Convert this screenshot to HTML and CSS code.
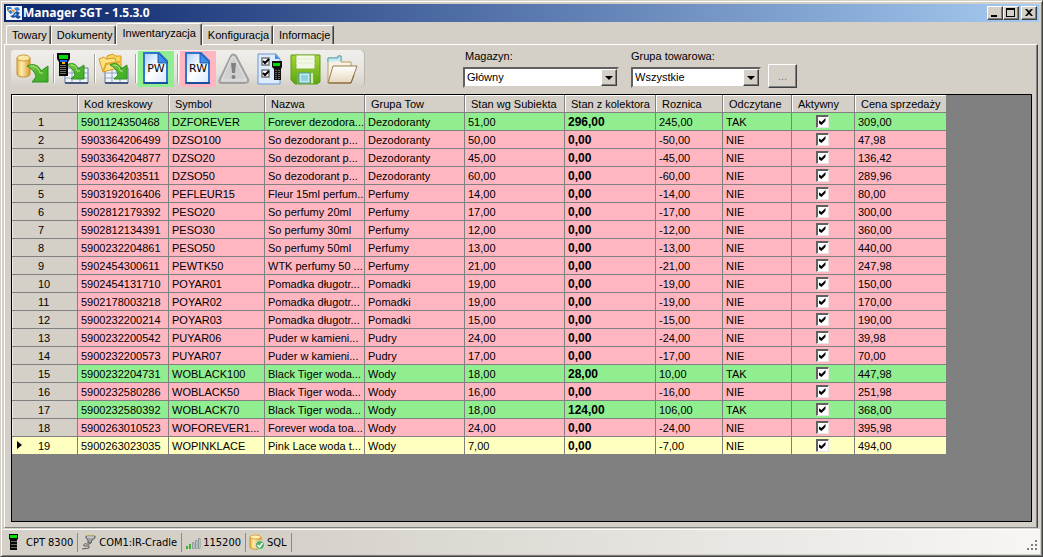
FILE: index.html
```html
<!DOCTYPE html>
<html lang="pl">
<head>
<meta charset="utf-8">
<title>Manager SGT</title>
<link rel="stylesheet" href="styles.css">
</head>
<body>
<svg class="defs" width="0" height="0" aria-hidden="true">
  <defs>
    <linearGradient id="green" x1="0" y1="0" x2="1" y2="1"><stop offset="0" stop-color="#8ed24e"/><stop offset=".5" stop-color="#4fb52c"/><stop offset="1" stop-color="#3fae2a"/></linearGradient>
    <linearGradient id="gold"><stop offset="0" stop-color="#e9b44a"/><stop offset=".35" stop-color="#fdeeb0"/><stop offset="1" stop-color="#d99a2b"/></linearGradient>
    <linearGradient id="page" x1="0" y1="0" x2="1" y2="1"><stop offset="0" stop-color="#a9cdf8"/><stop offset=".5" stop-color="#ffffff"/><stop offset="1" stop-color="#d5e6fb"/></linearGradient>
    <linearGradient id="lime" x1="0" y1="0" x2="0" y2="1"><stop offset="0" stop-color="#a5d632"/><stop offset="1" stop-color="#5da512"/></linearGradient>
    <linearGradient id="cream" x1="0" y1="0" x2="0" y2="1"><stop offset="0" stop-color="#ffffff"/><stop offset="1" stop-color="#e5d7bd"/></linearGradient>
    <g id="arrow"><path d="M0 2C6-1 12 1 14 7L21 2V18H5L9 13C8 8 5 5 0 2Z" fill="url(#green)" stroke="#2f8f1f"/><path d="M4 2C9 2 12 5 13 9L16 9" fill="none" stroke="#b6e58b"/></g>
    <g id="arrow-small"><path d="M0 2C5-1 10 1 11 6L17 2V16H4L8 12C7 7 4 4 0 2Z" fill="url(#green)" stroke="#2f8f1f"/><path d="M4 2C8 2 10 5 10 8L13 8" fill="none" stroke="#b6e58b"/></g>
    <g id="scanner"><path d="M0 0H13V6L11 9V23H2V9L0 6Z" fill="#080808"/><path d="M2 2H11V6H2Z" fill="#00d800"/><path d="M3 8H10" stroke="#1767e8" stroke-width="2"/><path d="M5 10H8" stroke="#f0c000" stroke-width="2"/><path d="M4 12V22M6 12V22M8 12V22" stroke="#d8d8d8" stroke-dasharray="1 1"/></g>
    <g id="grid"><path d="M0 0H23V15H0Z" fill="#f0f4fa" stroke="#637899"/><path d="M0 5H23M0 10H23M7 0V15M15 0V15" stroke="#8fa3c2"/><path d="M0 15H23" stroke="#46597c" stroke-width="2"/></g>
    <g id="sheet"><path d="M1 1H16L24 9V31H1Z" fill="url(#page)" stroke="#2f74d0" stroke-width="2"/><path d="M15 1L25 11H15Z" fill="#3d8ee8" stroke="#1c58b0"/><path d="M1 31H25" stroke="#174f9f" stroke-width="2"/></g>
  </defs>
</svg>

<div class="window">
  <header class="titlebar">
    <svg class="logo" width="16" height="14" viewBox="0 0 16 14" aria-hidden="true"><path d="M0 0H16V14H0Z" fill="#eef4fb"/><path d="M1 1H5L6 3H3V4H1ZM2 5L5 4 7 7 4 8ZM8 2L12 1 14 4 10 5Z" fill="#2f83d2"/><path d="M5 3L9 4 8 7 6 5ZM1 4H3V5H1Z" fill="#f3912c"/><path d="M8 7L11 5 14 7 12 9 15 11 12 13 9 11 7 12 4 10 7 9Z" fill="#1b50a0"/><path d="M9 7L11 9 8 10Z" fill="#83baf0"/></svg>
    <h1 class="caption">Manager SGT - 1.5.3.0</h1>
    <div class="window-buttons">
      <button class="winbtn" type="button" aria-label="Minimalizuj"><svg width="12" height="10" viewBox="0 0 12 10"><path d="M2 7H8V9H2Z"/></svg></button>
      <button class="winbtn" type="button" aria-label="Maksymalizuj"><svg width="12" height="10" viewBox="0 0 12 10"><path d="M1 0H10V9H1ZM2 2V8H9V2Z" fill-rule="evenodd"/></svg></button>
      <button class="winbtn winbtn-close" type="button" aria-label="Zamknij"><svg width="12" height="10" viewBox="0 0 12 10"><path d="M2 1H4L6 3 8 1H10L7 4.5 10 8H8L6 6 4 8H2L5 4.5Z"/></svg></button>
    </div>
  </header>

  <nav class="tabs" role="tablist">
    <button class="tab" type="button" role="tab">Towary</button>
    <button class="tab" type="button" role="tab">Dokumenty</button>
    <button class="tab tab-active" type="button" role="tab" aria-selected="true">Inwentaryzacja</button>
    <button class="tab" type="button" role="tab">Konfiguracja</button>
    <button class="tab" type="button" role="tab">Informacje</button>
  </nav>

  <main class="panel">
    <div class="controls">
      <div class="toolbar" role="toolbar">
        <button class="tool" type="button" aria-label="Pobierz dane"><svg width="34" height="32" viewBox="0 0 34 32"><path d="M1 5V21C1 25 14 25 14 21V5Z" fill="url(#gold)" stroke="#c58a2a"/><ellipse cx="7.5" cy="5" rx="6.5" ry="3" fill="#fbe7a4" stroke="#d09a3c"/><use href="#arrow" x="11" y="11"/></svg></button>
        <span class="sep"></span>
        <button class="tool" type="button" aria-label="Pobierz z kolektora"><svg width="34" height="32" viewBox="0 0 34 32"><use href="#grid" x="8" y="15"/><use href="#arrow-small" x="10" y="10"/><use href="#scanner"/></svg></button>
        <span class="sep"></span>
        <button class="tool" type="button" aria-label="Otwórz z pliku"><svg width="34" height="32" viewBox="0 0 34 32"><use href="#grid" x="7" y="15"/><path d="M9 3L15 1 17 3H23V15H9Z" fill="#fbd55c" stroke="#d39a22"/><path d="M1 6L6 4 8 6 17 5 20 15 5 19Z" fill="#fde283" stroke="#d39a22"/><path d="M5 19L8 11 22 9" fill="none" stroke="#e3a92e" stroke-width="2"/><use href="#arrow-small" x="12" y="10"/></svg></button>
        <span class="sep"></span>
        <button class="tool tool-doc tool-green" type="button"><svg width="26" height="33" viewBox="0 0 26 33" aria-hidden="true"><use href="#sheet"/></svg><span class="doc-label">PW</span></button>
        <span class="sep sep-tight"></span>
        <button class="tool tool-doc tool-pink" type="button"><svg width="26" height="33" viewBox="0 0 26 33" aria-hidden="true"><use href="#sheet"/></svg><span class="doc-label">RW</span></button>
        <button class="tool" type="button" aria-label="Ostrzeżenia"><svg width="32" height="32" viewBox="0 0 32 32"><path d="M13 3Q15 0 18 3L30 26Q31 30 27 30H4Q0 30 2 26Z" fill="#d0d0d0" stroke="#a0a0a0" stroke-width="2"/><path d="M13 5Q15 2 17 5L28 27H4Z" fill="none" stroke="#e2e2e2"/><path d="M13 10H18L17 20H14Z" fill="#808080"/><circle cx="15.500" cy="24" r="2" fill="#808080"/></svg></button>
        <button class="tool" type="button" aria-label="Lista kontrolna"><svg class="icon-list" width="26" height="32" viewBox="0 0 26 32"><path d="M1 1H19L23 6V31H1Z" fill="#dcecff" stroke="#6a94d4"/><path d="M18 1V6H23Z" fill="#478ce0"/><path d="M5 5H12V12H5ZM5 17H12V24H5Z" fill="#fff" stroke="#777" stroke-width="1.500"/><path d="M6 8L8 10 12 6M6 20L8 22 12 18" fill="none" stroke="#000" stroke-width="2"/><path d="M15 8H25V14L24 16V27H17V16L15 14Z" fill="#111"/><path d="M16 10H23V13H16Z" fill="#00dc00"/><path d="M19 17V26M22 17V26" stroke="#b5b5b5" stroke-dasharray="1 1"/></svg></button>
        <button class="tool" type="button" aria-label="Zapisz"><svg width="32" height="32" viewBox="0 0 32 32"><path d="M1 2H30V29L27 31H5L1 27Z" fill="url(#lime)" stroke="#5c9b16"/><path d="M6 2H25V16H6Z" fill="#f2f8e5" stroke="#86b53c"/><path d="M6 6H25M6 10H25" stroke="#e1edc8"/><path d="M7 19H24V31H7Z" fill="#77b82d"/><path d="M9 20H20V30H9Z" fill="#c8eef4" stroke="#4d9aaa"/><path d="M11 22H18V28H11Z" fill="#8dd3df"/><path d="M22 20V30" stroke="#d6e9b2" stroke-width="2"/></svg></button>
        <button class="tool" type="button" aria-label="Otwórz"><svg width="32" height="32" viewBox="0 0 32 32"><path d="M2 30V5H12V3H15V9H25V14" fill="#f7f1e5" stroke="#b99c6b"/><path d="M2 9V5H12V3H15V8" fill="#c9eaf0" stroke="#50a8b5"/><path d="M7 13H31L25 30H2Z" fill="url(#cream)" stroke="#9a7a47"/><path d="M3 30H25L28 22" fill="none" stroke="#876634"/></svg></button>
      </div>

      <div class="field field-store">
        <label for="store">Magazyn:</label>
        <div class="combo"><select id="store"><option>Główny</option></select><span class="drop"></span></div>
      </div>
      <div class="field field-group">
        <label for="group">Grupa towarowa:</label>
        <div class="combo"><select id="group"><option>Wszystkie</option></select><span class="drop"></span></div>
      </div>
      <button class="more" type="button" disabled>...</button>
    </div>

    <div class="datagrid">
      <table>
        <colgroup><col class="c-head"><col class="c-code"><col class="c-symbol"><col class="c-std"><col class="c-std"><col class="c-std"><col class="c-code"><col class="c-diff"><col class="c-read"><col class="c-active"><col class="c-code"></colgroup>
        <thead><tr><th></th><th>Kod kreskowy</th><th>Symbol</th><th>Nazwa</th><th>Grupa Tow</th><th>Stan wg Subiekta</th><th>Stan z kolektora</th><th>Roznica</th><th>Odczytane</th><th>Aktywny</th><th>Cena sprzedaży</th></tr></thead>
        <tbody>
          <tr class="ok"><th>1</th><td>5901124350468</td><td>DZFOREVER</td><td>Forever dezodora...</td><td>Dezodoranty</td><td>51,00</td><td>296,00</td><td>245,00</td><td>TAK</td><td><input type="checkbox" aria-label="Aktywny" checked></td><td>309,00</td></tr>
          <tr><th>2</th><td>5903364206499</td><td>DZSO100</td><td>So dezodorant p...</td><td>Dezodoranty</td><td>50,00</td><td>0,00</td><td>-50,00</td><td>NIE</td><td><input type="checkbox" aria-label="Aktywny" checked></td><td>47,98</td></tr>
          <tr><th>3</th><td>5903364204877</td><td>DZSO20</td><td>So dezodorant p...</td><td>Dezodoranty</td><td>45,00</td><td>0,00</td><td>-45,00</td><td>NIE</td><td><input type="checkbox" aria-label="Aktywny" checked></td><td>136,42</td></tr>
          <tr><th>4</th><td>5903364203511</td><td>DZSO50</td><td>So dezodorant p...</td><td>Dezodoranty</td><td>60,00</td><td>0,00</td><td>-60,00</td><td>NIE</td><td><input type="checkbox" aria-label="Aktywny" checked></td><td>289,96</td></tr>
          <tr><th>5</th><td>5903192016406</td><td>PEFLEUR15</td><td>Fleur 15ml perfum...</td><td>Perfumy</td><td>14,00</td><td>0,00</td><td>-14,00</td><td>NIE</td><td><input type="checkbox" aria-label="Aktywny" checked></td><td>80,00</td></tr>
          <tr><th>6</th><td>5902812179392</td><td>PESO20</td><td>So perfumy 20ml</td><td>Perfumy</td><td>17,00</td><td>0,00</td><td>-17,00</td><td>NIE</td><td><input type="checkbox" aria-label="Aktywny" checked></td><td>300,00</td></tr>
          <tr><th>7</th><td>5902812134391</td><td>PESO30</td><td>So perfumy 30ml</td><td>Perfumy</td><td>12,00</td><td>0,00</td><td>-12,00</td><td>NIE</td><td><input type="checkbox" aria-label="Aktywny" checked></td><td>360,00</td></tr>
          <tr><th>8</th><td>5900232204861</td><td>PESO50</td><td>So perfumy 50ml</td><td>Perfumy</td><td>13,00</td><td>0,00</td><td>-13,00</td><td>NIE</td><td><input type="checkbox" aria-label="Aktywny" checked></td><td>440,00</td></tr>
          <tr><th>9</th><td>5902454300611</td><td>PEWTK50</td><td>WTK perfumy 50 ...</td><td>Perfumy</td><td>21,00</td><td>0,00</td><td>-21,00</td><td>NIE</td><td><input type="checkbox" aria-label="Aktywny" checked></td><td>247,98</td></tr>
          <tr><th>10</th><td>5902454131710</td><td>POYAR01</td><td>Pomadka długotr...</td><td>Pomadki</td><td>19,00</td><td>0,00</td><td>-19,00</td><td>NIE</td><td><input type="checkbox" aria-label="Aktywny" checked></td><td>150,00</td></tr>
          <tr><th>11</th><td>5902178003218</td><td>POYAR02</td><td>Pomadka długotr...</td><td>Pomadki</td><td>19,00</td><td>0,00</td><td>-19,00</td><td>NIE</td><td><input type="checkbox" aria-label="Aktywny" checked></td><td>170,00</td></tr>
          <tr><th>12</th><td>5900232200214</td><td>POYAR03</td><td>Pomadka długotr...</td><td>Pomadki</td><td>15,00</td><td>0,00</td><td>-15,00</td><td>NIE</td><td><input type="checkbox" aria-label="Aktywny" checked></td><td>190,00</td></tr>
          <tr><th>13</th><td>5900232200542</td><td>PUYAR06</td><td>Puder w kamieni...</td><td>Pudry</td><td>24,00</td><td>0,00</td><td>-24,00</td><td>NIE</td><td><input type="checkbox" aria-label="Aktywny" checked></td><td>39,98</td></tr>
          <tr><th>14</th><td>5900232200573</td><td>PUYAR07</td><td>Puder w kamieni...</td><td>Pudry</td><td>17,00</td><td>0,00</td><td>-17,00</td><td>NIE</td><td><input type="checkbox" aria-label="Aktywny" checked></td><td>70,00</td></tr>
          <tr class="ok"><th>15</th><td>5900232204731</td><td>WOBLACK100</td><td>Black Tiger woda...</td><td>Wody</td><td>18,00</td><td>28,00</td><td>10,00</td><td>TAK</td><td><input type="checkbox" aria-label="Aktywny" checked></td><td>447,98</td></tr>
          <tr><th>16</th><td>5900232580286</td><td>WOBLACK50</td><td>Black Tiger woda...</td><td>Wody</td><td>16,00</td><td>0,00</td><td>-16,00</td><td>NIE</td><td><input type="checkbox" aria-label="Aktywny" checked></td><td>251,98</td></tr>
          <tr class="ok"><th>17</th><td>5900232580392</td><td>WOBLACK70</td><td>Black Tiger woda...</td><td>Wody</td><td>18,00</td><td>124,00</td><td>106,00</td><td>TAK</td><td><input type="checkbox" aria-label="Aktywny" checked></td><td>368,00</td></tr>
          <tr><th>18</th><td>5900263010523</td><td>WOFOREVER1...</td><td>Forever woda toa...</td><td>Wody</td><td>24,00</td><td>0,00</td><td>-24,00</td><td>NIE</td><td><input type="checkbox" aria-label="Aktywny" checked></td><td>395,98</td></tr>
          <tr class="current"><th>19</th><td>5900263023035</td><td>WOPINKLACE</td><td>Pink Lace woda t...</td><td>Wody</td><td>7,00</td><td>0,00</td><td>-7,00</td><td>NIE</td><td><input type="checkbox" aria-label="Aktywny" checked></td><td>494,00</td></tr>
        </tbody>
      </table>
    </div>
  </main>

  <footer class="statusbar">
    <span class="status"><svg class="icon-phone" width="9" height="16" viewBox="0 0 9 16" aria-hidden="true"><path d="M0 0H9V5L8 6V16H1V6L0 5Z" fill="#080808"/><path d="M1 1H8V4H1Z" fill="#00e000"/><path d="M3 7V15M5 7V15M7 7V15" stroke="#c8c8c8" stroke-dasharray="1 2"/></svg>CPT 8300</span>
    <span class="status"><svg width="16" height="16" viewBox="0 0 16 16" aria-hidden="true"><path d="M5 2H14V4L11 6L10 9H7V6L5 4Z" fill="#a3a3a3" stroke="#5c5c5c"/><path d="M6 0V2M9 0V2M12 0V2" stroke="#e0cf62"/><path d="M9 8Q10 11 6 10Q2 9 3 12L8 12L8 14L1 15" fill="none" stroke="#5b5b5b"/><path d="M6 3H13" stroke="#eee"/></svg>COM1:IR-Cradle</span>
    <span class="status"><svg width="16" height="16" viewBox="0 0 16 16" aria-hidden="true"><path d="M1 12H3V15H1ZM4 10H6V15H4Z" fill="#36b536"/><path d="M7.500 8.500H9V14.500H7.500ZM10.500 6.500H12V14.500H10.500ZM13.500 4.500H15V14.500H13.500Z" fill="#eee" stroke="#8a989d"/></svg>115200</span>
    <span class="status"><svg width="16" height="16" viewBox="0 0 16 16" aria-hidden="true"><path d="M1 3V13C1 16 12 16 12 13V3Z" fill="url(#gold)" stroke="#d19326"/><ellipse cx="6.500" cy="3" rx="5.500" ry="2" fill="#fff0b5" stroke="#d9a13b"/><circle cx="11" cy="11" r="4.500" fill="#58ad69" stroke="#c8e6cd"/><path d="M8.500 11L10.500 13 13.500 9" fill="none" stroke="#fff" stroke-width="1.500"/></svg>SQL</span>
    <svg class="grip" width="11" height="11" viewBox="0 0 11 11" aria-hidden="true"><path d="M8 0H10V2H8ZM4 4H6V6H4ZM8 4H10V6H8ZM0 8H2V10H0ZM4 8H6V10H4ZM8 8H10V10H8Z" fill="#7f7c77"/></svg>
  </footer>
</div>
</body>
</html>
```

FILE: styles.css
```css
* { box-sizing: border-box; }

body {
  margin: 0;
  font: 11px/13px "Liberation Sans", Arial, sans-serif;
  color: #000;
  background: #d4d0c8;
}

button, select, input { font: inherit; color: inherit; margin: 0; }
svg { display: block; flex: none; }
.defs { position: absolute; }

.window {
  min-height: 100vh;
  display: flex;
  flex-direction: column;
  padding: 2px;
  border: 1px solid;
  border-color: #d4d0c8 #404040 #404040 #d4d0c8;
  box-shadow: inset 1px 1px #fff, inset -1px -1px #808080;
}

/* Title bar */
.titlebar {
  display: flex;
  align-items: center;
  height: 18px;
  margin: 1px 1px 0;
  padding: 0 2px;
  background: linear-gradient(90deg, #0a246a, #a6caf0);
}
.caption {
  flex: 1;
  margin: 0 0 0 1px;
  font: bold 12px/16px "Noto Sans", sans-serif;
  color: #fff;
}
.window-buttons { display: flex; }
.winbtn {
  width: 16px;
  height: 14px;
  padding: 0 1px;
  background: #d4d0c8;
  border: 1px solid;
  border-color: #fff #404040 #404040 #fff;
  box-shadow: inset -1px -1px #808080;
}
.winbtn-close { margin-left: 2px; }

/* Tabs */
.tabs {
  display: flex;
  align-items: flex-end;
  height: 22px;
  padding-left: 3px;
}
.tab {
  height: 19px;
  padding: 0 3px 0 5px;
  background: #d4d0c8;
  border: 1px solid;
  border-color: #fff #404040 transparent #fff;
  border-bottom: 0;
  border-radius: 2px 2px 0 0;
  box-shadow: inset -1px 0 #808080;
}
.tab-active {
  position: relative;
  height: 22px;
  margin-bottom: -1px;
  padding: 0 5px 2px;
}

.panel {
  flex: 1;
  display: flex;
  flex-direction: column;
  margin: 0 2px 0 1px;
  padding: 0 5px 5px 6px;
  border: 1px solid;
  border-color: #fff #404040 #808080 #fff;
  box-shadow: inset -1px 0 #808080;
}

/* Toolbar row */
.controls { display: flex; height: 49px; padding-top: 5px; }
.toolbar {
  display: flex;
  align-items: center;
  height: 37px;
  width: 353px;
  padding-left: 4px;
  border-radius: 3px 5px 5px 3px;
  background: linear-gradient(#f1efeb, #e6e3de 60%, #d4d0c8);
  box-shadow: 1px 0 #bab6ad;
}
.tool {
  display: flex;
  align-items: center;
  justify-content: center;
  width: 36px;
  height: 36px;
  padding: 0;
  background: none;
  border: 0;
}
.sep { width: 1px; height: 29px; margin: 0 2px; background: #a6a39c; box-shadow: 1px 0 #fff; }
.sep-tight { margin: 0 2px 0 3px; }
.tool-doc { display: grid; place-items: center; }
.tool-doc > * { grid-area: 1 / 1; }
.tool-green { background: #90ee90; }
.tool-pink { background: #ffb6c1; }
.doc-label { font: 11px/12px "DejaVu Sans", sans-serif; }

.field { display: flex; flex-direction: column; gap: 4px; }
.field-store { width: 156px; margin-left: 99px; }
.field-group { width: 130px; margin-left: 12px; }
.field label { padding-left: 2px; }
.field-group label { padding-left: 0; }
.combo { position: relative; }
.combo select {
  display: block;
  width: 100%;
  height: 21px;
  padding: 0 20px 0 2px;
  appearance: none;
  background: #fff;
  border: 2px solid;
  border-color: #606060 #d4d0c8 #d4d0c8 #606060;
  border-radius: 0;
}
.drop {
  position: absolute;
  top: 2px;
  right: 2px;
  bottom: 2px;
  width: 16px;
  background: #d4d0c8;
  border: 1px solid;
  border-color: #fff #404040 #404040 #fff;
  box-shadow: inset -1px -1px #808080;
  pointer-events: none;
}
.drop::before {
  content: "";
  position: absolute;
  left: 3px;
  top: 6px;
  border: 4px solid transparent;
  border-top-color: #000;
  border-bottom: 0;
}
.more {
  width: 29px;
  height: 24px;
  margin: 14px 0 0 7px;
  padding: 0;
  color: #808080;
  background: #d4d0c8;
  border: 1px solid;
  border-color: #fff #404040 #404040 #fff;
  box-shadow: inset -1px -1px #808080;
}

/* Data grid */
.datagrid { flex: 1; background: #808080; border: 1px solid #000; }
table { table-layout: fixed; width: 934px; border-spacing: 0; }
.c-head { width: 66px; }
.c-code { width: 91px; }
.c-symbol { width: 96px; }
.c-std { width: 100px; }
.c-diff { width: 67px; }
.c-read { width: 69px; }
.c-active { width: 63px; }

th, td {
  height: 18px;
  padding: 1px 0 0 3px;
  overflow: hidden;
  line-height: 15px;
  white-space: nowrap;
  text-align: left;
  font-weight: normal;
  border-right: 1px solid #808080;
  border-bottom: 1px solid #808080;
}
td:last-child, thead th:last-child { border-right: 0; }
th { background: #d4d0c8; }
thead th { padding-left: 6px; box-shadow: inset 1px 1px #fff; }
tbody th { position: relative; padding-left: 26px; box-shadow: inset 1px 0 #f0eeea; }
td { background: #ffb6c1; }
.ok td { background: #90ee90; }
.current th, .current td { background: #ffffc0; }
.current th::before {
  content: "";
  position: absolute;
  left: 5px;
  top: 4px;
  border: 4px solid transparent;
  border-left: 5px solid #000;
  border-right: 0;
}
td:nth-child(7) { font: bold 12px/15px "Liberation Sans", Arial, sans-serif; }
td:nth-child(10) { padding: 0 2px 0 0; }
td input {
  appearance: none;
  display: block;
  width: 13px;
  height: 13px;
  margin: 0 auto;
  background: #fff;
  border: 1px solid;
  border-color: #606060 #e8e6e2 #e8e6e2 #606060;
  box-shadow: inset 1px 1px #606060;
}
td input:checked::before {
  content: "";
  display: block;
  width: 7px;
  height: 7px;
  margin: 2px;
  background: #000;
  clip-path: polygon(0 2px, 3px 4px, 7px 0, 7px 3px, 3px 7px, 0 5px);
}

/* Status bar */
.statusbar {
  display: flex;
  align-items: center;
  height: 25px;
  margin-top: 1px;
  padding: 0 2px 0 1px;
  font: 11px/13px "DejaVu Sans Condensed", "Noto Sans", sans-serif;
  border-top: 1px solid #fff;
  background: linear-gradient(90deg, #d4d0c8 25%, #f7f6f5);
}
.status {
  display: flex;
  align-items: center;
  gap: 2px;
  height: 19px;
  padding: 0 4px 0 3px;
  border-right: 1px solid #8c8982;
}
.icon-phone { margin: 0 6px 0 2px; }
.grip { margin: 7px 0 0 auto; }
```
